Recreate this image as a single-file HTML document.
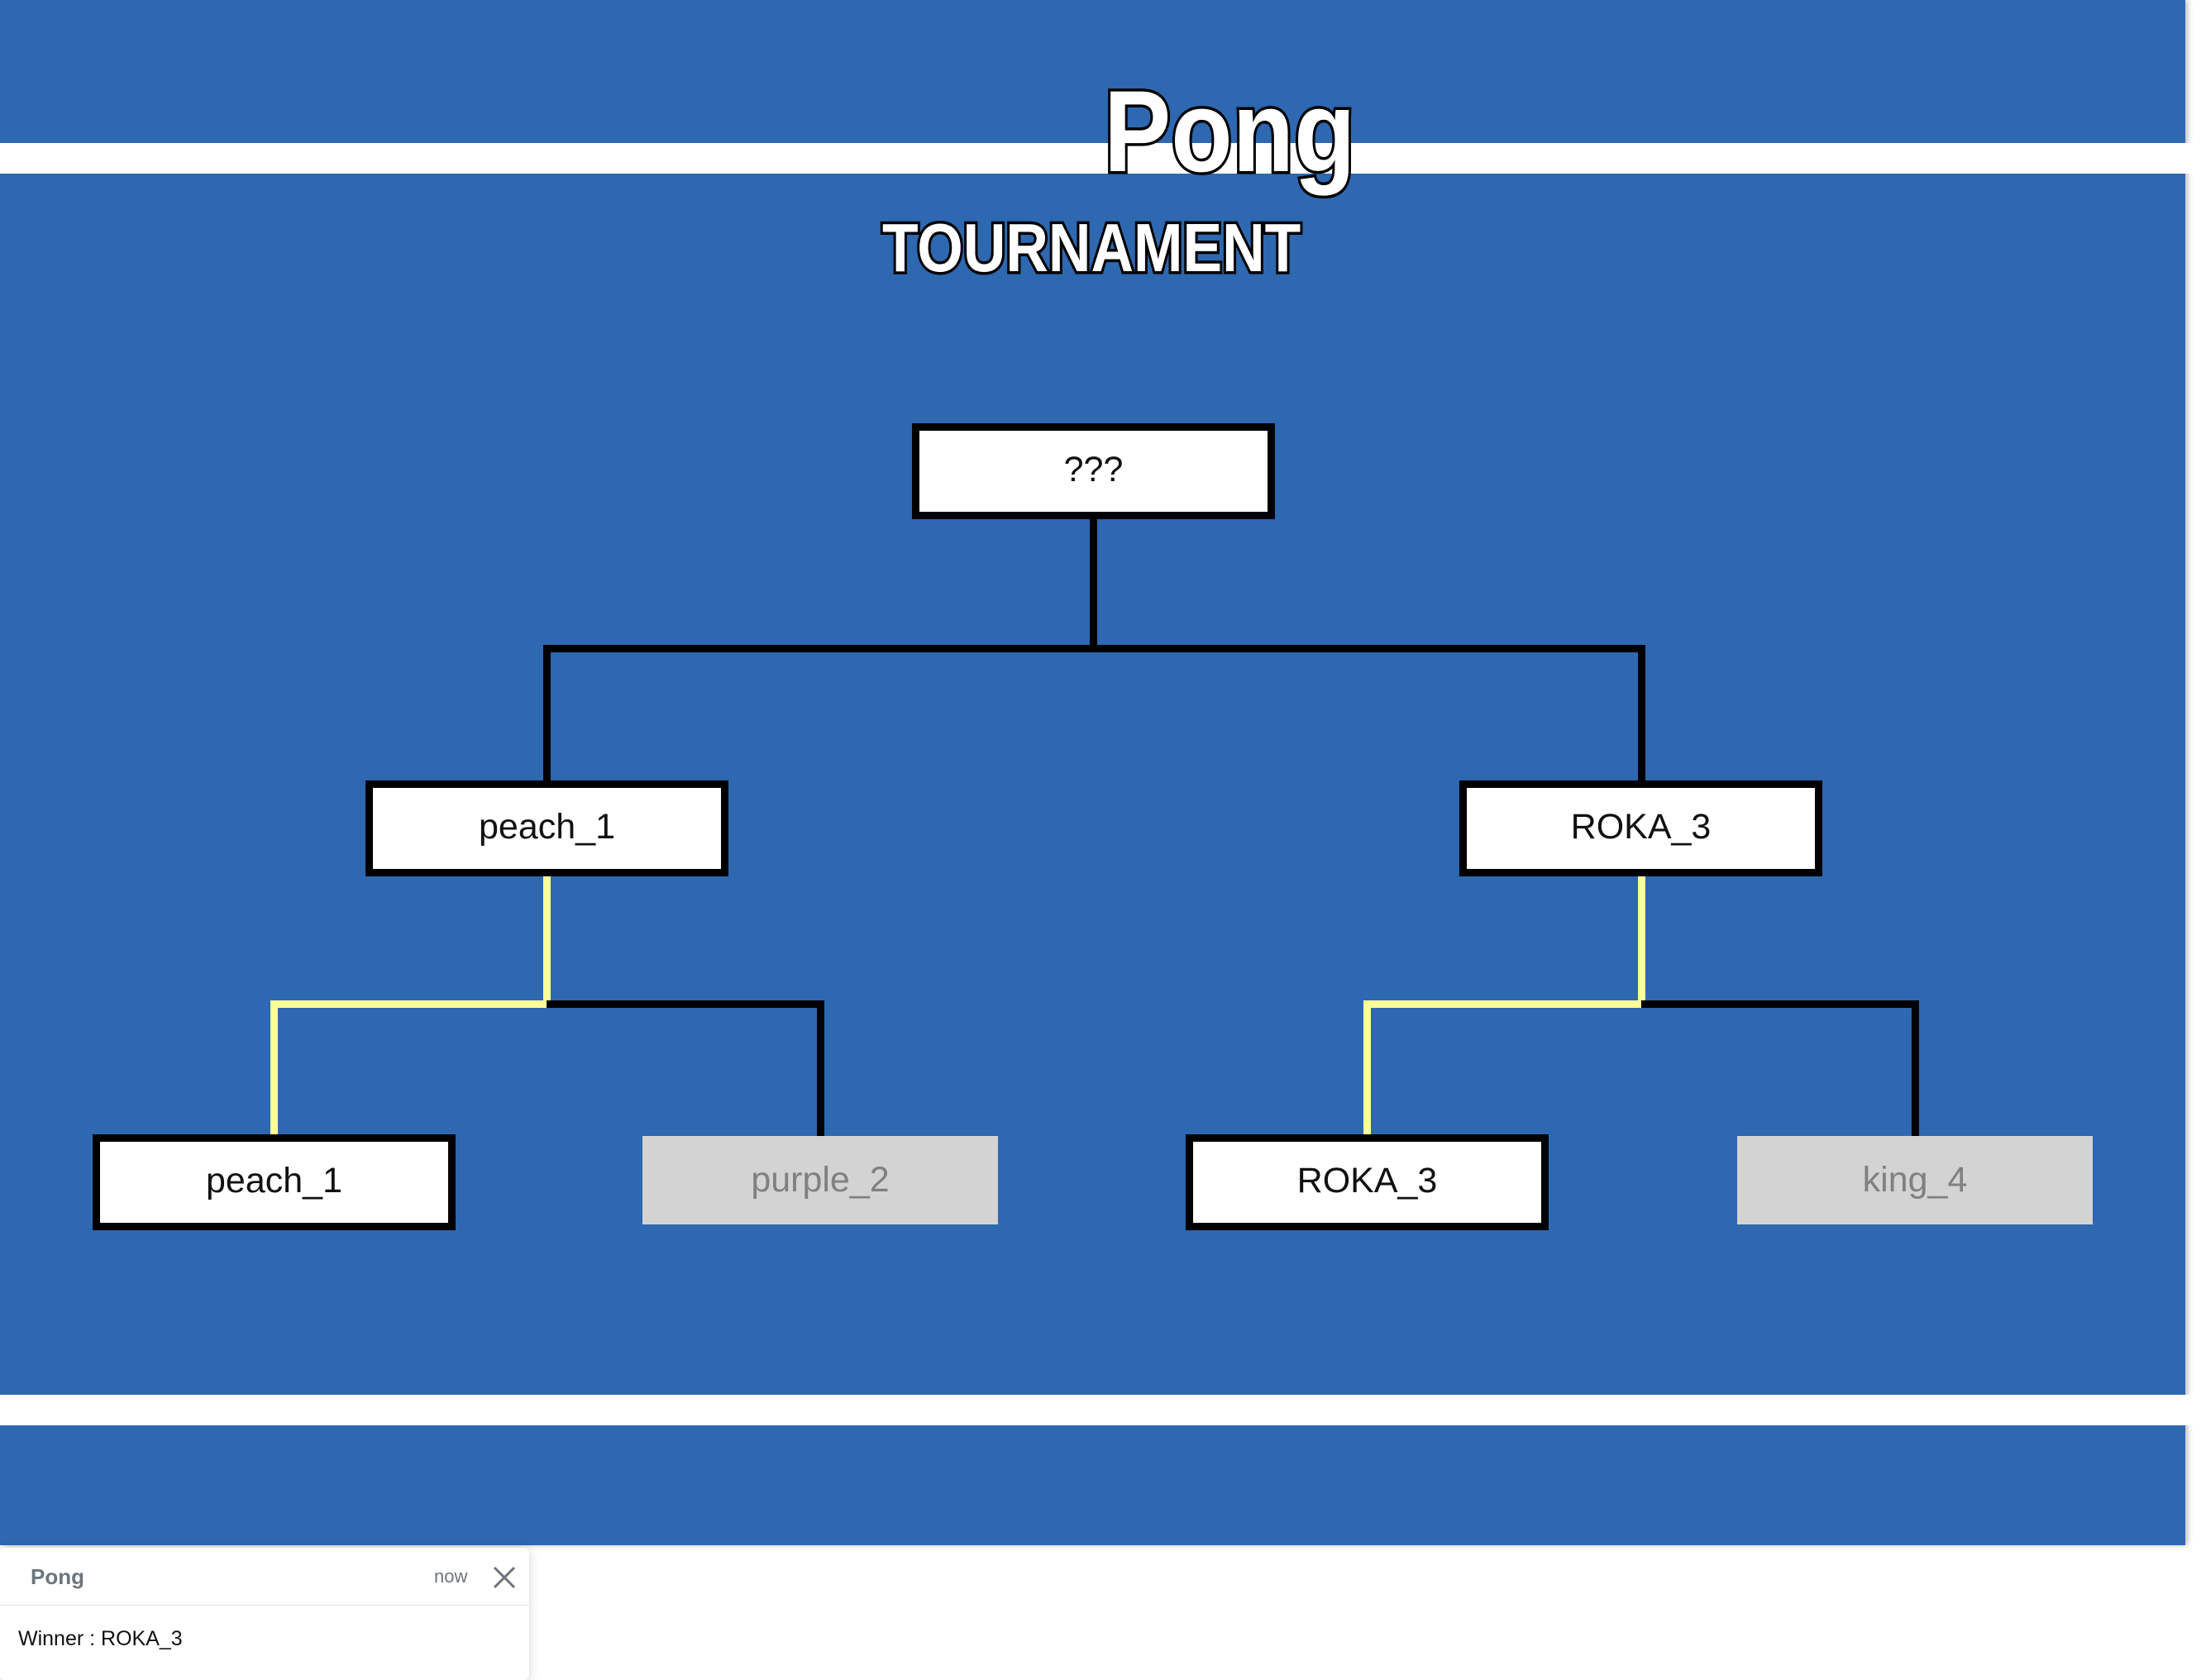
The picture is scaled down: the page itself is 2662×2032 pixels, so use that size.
<!DOCTYPE html>
<html><head><meta charset="utf-8"><style>
*{margin:0;padding:0;box-sizing:border-box}
body{width:2662px;height:2024px;background:#fff;position:relative;overflow:hidden;font-family:"Liberation Sans",sans-serif}
.a{position:absolute}
.blue{background:#2d68b0}
.box{position:absolute;width:439px;height:116px;background:#fff;border:9px solid #000;display:flex;align-items:center;justify-content:center;font-size:43px;color:#111;padding-bottom:4px}
.gbox{position:absolute;width:430px;height:107px;background:#d3d3d3;display:flex;align-items:center;justify-content:center;font-size:43px;color:#808080}
.k{position:absolute;background:#000}
.y{position:absolute;background:#ffff99}
.title{position:absolute;color:#fff;font-weight:bold;-webkit-text-stroke:7px #000;paint-order:stroke fill;white-space:nowrap;transform-origin:0 0}
</style></head><body>
<div class="a blue" style="left:0;top:0;width:2643px;height:1869px;box-shadow:3px 0 6px rgba(0,0,0,.25)"></div>
<div class="a" style="left:0;top:173px;width:2656px;height:37px;background:#fff"></div>
<div class="a" style="left:0;top:1687px;width:2656px;height:37px;background:#fff"></div>

<div class="title" style="left:1335px;top:78px;font-size:140px;transform:scaleX(0.87)">Pong</div>
<div class="title" style="left:1067px;top:252px;font-size:83px;transform:scaleX(0.86)">TOURNAMENT</div>

<div class="k" style="left:1318px;top:625px;width:9px;height:164px"></div>
<div class="k" style="left:657px;top:780px;width:1333px;height:9px"></div>
<div class="k" style="left:657px;top:780px;width:9px;height:170px"></div>
<div class="k" style="left:1981px;top:780px;width:9px;height:170px"></div>

<div class="y" style="left:657px;top:1055px;width:9px;height:164px"></div>
<div class="y" style="left:327px;top:1210px;width:335px;height:9px"></div>
<div class="y" style="left:327px;top:1210px;width:9px;height:165px"></div>
<div class="k" style="left:661px;top:1210px;width:336px;height:9px"></div>
<div class="k" style="left:988px;top:1210px;width:9px;height:165px"></div>

<div class="y" style="left:1981px;top:1055px;width:9px;height:164px"></div>
<div class="y" style="left:1649px;top:1210px;width:337px;height:9px"></div>
<div class="y" style="left:1649px;top:1210px;width:9px;height:165px"></div>
<div class="k" style="left:1985px;top:1210px;width:327px;height:9px"></div>
<div class="k" style="left:2312px;top:1210px;width:9px;height:165px"></div>

<div class="box" style="left:1103px;top:512px">???</div>
<div class="box" style="left:442px;top:944px">peach_1</div>
<div class="box" style="left:1765px;top:944px">ROKA_3</div>
<div class="box" style="left:112px;top:1372px">peach_1</div>
<div class="gbox" style="left:777px;top:1374px">purple_2</div>
<div class="box" style="left:1434px;top:1372px">ROKA_3</div>
<div class="gbox" style="left:2101px;top:1374px">king_4</div>

<div class="a" style="left:0;top:1872px;width:640px;height:160px;background:#fff;border-radius:6px;box-shadow:0 2px 12px rgba(0,0,0,.18)">
  <div class="a" style="left:37px;top:20px;font-size:26px;font-weight:bold;color:#6c757d">Pong</div>
  <div class="a" style="left:525px;top:22px;font-size:22px;color:#6c757d">now</div>
  <svg class="a" style="left:596px;top:22px" width="28" height="28" viewBox="0 0 28 28"><path d="M2 2L26 26M26 2L2 26" stroke="#6c757d" stroke-width="3"/></svg>
  <div class="a" style="left:0;top:69px;width:640px;height:1px;background:#e5e5e5"></div>
  <div class="a" style="left:22px;top:96px;font-size:25px;color:#111">Winner : ROKA_3</div>
</div>
</body></html>
